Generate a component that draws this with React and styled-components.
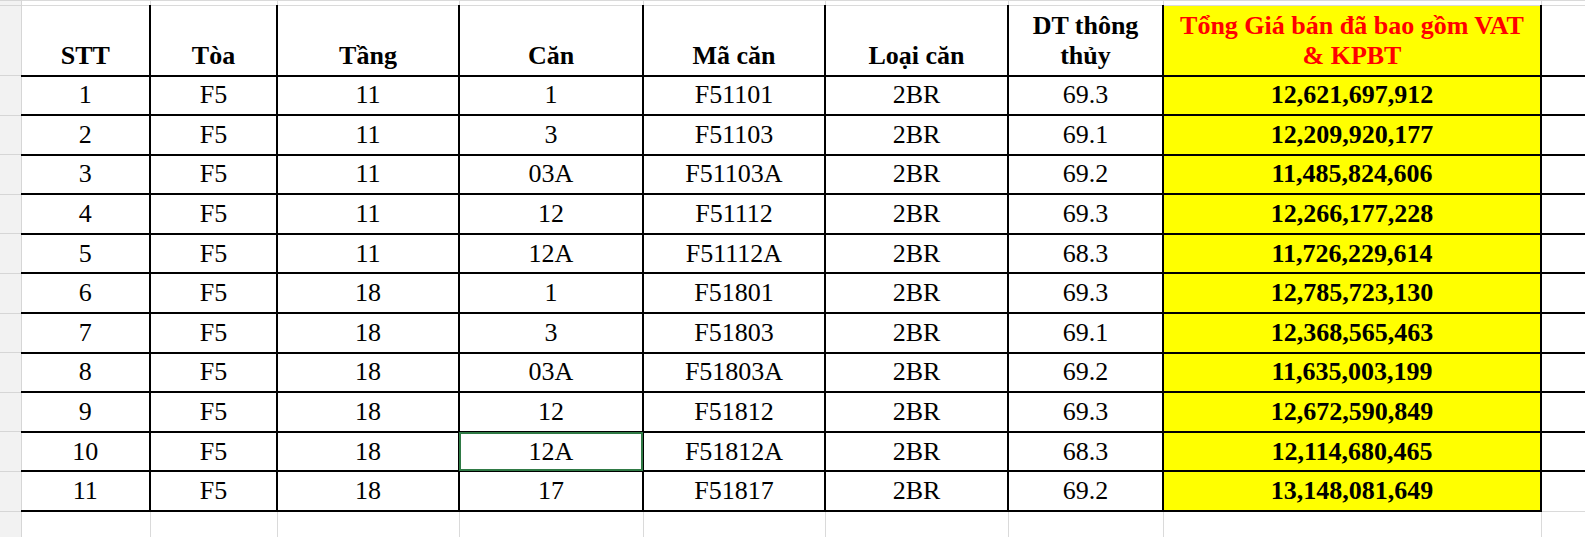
import React from 'react';
import styled, { createGlobalStyle } from 'styled-components'

const rows = [
  [1, 'F5', 11, '1', 'F51101', '2BR', '69.3', '12,621,697,912'],
  [2, 'F5', 11, '3', 'F51103', '2BR', '69.1', '12,209,920,177'],
  [3, 'F5', 11, '03A', 'F51103A', '2BR', '69.2', '11,485,824,606'],
  [4, 'F5', 11, '12', 'F51112', '2BR', '69.3', '12,266,177,228'],
  [5, 'F5', 11, '12A', 'F51112A', '2BR', '68.3', '11,726,229,614'],
  [6, 'F5', 18, '1', 'F51801', '2BR', '69.3', '12,785,723,130'],
  [7, 'F5', 18, '3', 'F51803', '2BR', '69.1', '12,368,565,463'],
  [8, 'F5', 18, '03A', 'F51803A', '2BR', '69.2', '11,635,003,199'],
  [9, 'F5', 18, '12', 'F51812', '2BR', '69.3', '12,672,590,849'],
  [10, 'F5', 18, '12A', 'F51812A', '2BR', '68.3', '12,114,680,465'],
  [11, 'F5', 18, '17', 'F51817', '2BR', '69.2', '13,148,081,649'],
]

const widths = [21, 129, 127, 182, 184, 182, 183, 155, 378, 59]

// selected cell: row 10, column "Căn"
const selected = { row: 9, col: 3 }

export default function App() {
  return (
    <>
      <GlobalStyle />
      <Viewport>
        <Sheet>
          <colgroup>
            {widths.map((w, i) => <col key={i} style={{ width: w }} />)}
          </colgroup>
          <tbody>
            <TopRow>
              <Gutter />
              {widths.slice(1).map((w, i) => <Blank key={i} />)}
            </TopRow>
            <HeaderRow>
              <Gutter />
              <Head>STT</Head>
              <Head>Tòa</Head>
              <Head>Tầng</Head>
              <Head>Căn</Head>
              <Head>Mã căn</Head>
              <Head>Loại căn</Head>
              <Head>DT thông<br />thủy</Head>
              <Head highlight>Tổng Giá bán đã bao gồm VAT<br />&amp; KPBT</Head>
              <Blank />
            </HeaderRow>
            {rows.map((r, ri) => (
              <DataRow key={ri}>
                <Gutter />
                {r.slice(0, 7).map((v, ci) => (
                  <Cell key={ci} selected={selected.row === ri && selected.col === ci}>{v}</Cell>
                ))}
                <Price>{r[7]}</Price>
                <Edge />
              </DataRow>
            ))}
            <FillRow>
              <Gutter />
              {widths.slice(1).map((w, i) => <Blank key={i} />)}
            </FillRow>
          </tbody>
        </Sheet>
      </Viewport>
    </>
  );
}

const GlobalStyle = createGlobalStyle`
  html, body {
    margin: 0;
    padding: 0;
    background: #fff;
    overflow: hidden;
  }
`

const Viewport = styled.div`
  width: 1585px;
  height: 537px;
  overflow: hidden;
  font-family: "Liberation Serif", "Times New Roman", serif;
  color: #000;
`

const Sheet = styled.table`
  border-collapse: collapse;
  table-layout: fixed;
  width: 1600px;
  font-size: 26px;
`

const TopRow = styled.tr`
  height: 5px;
`

const HeaderRow = styled.tr`
  height: 70px;
`

const DataRow = styled.tr`
  height: 39.6px;
`

const FillRow = styled.tr`
  height: 60px;
`

const Gutter = styled.td`
  background: #f2f2f2;
  border: 1px solid #d6d6d6;
  border-left: none;
  padding: 0;
`

const Blank = styled.td`
  border: 1px solid #dadada;
  padding: 0;
`

const Edge = styled(Blank)`
  border-top: 2px solid #000;
`

const Head = styled.td`
  border: 2px solid #000;
  border-top: 1px solid #dadada;
  border-left-color: ${p => p.highlight ? '#000' : '#000'};
  &:nth-child(2) {
    border-left: 1px solid #d6d6d6;
  }
  background: ${p => p.highlight ? '#ffff00' : '#fff'};
  color: ${p => p.highlight ? '#ff0000' : '#000'};
  font-weight: bold;
  text-align: center;
  vertical-align: bottom;
  line-height: 30px;
  padding: 0 0 4px;
  white-space: nowrap;
`

const Cell = styled.td`
  border: 2px solid #000;
  &:nth-child(2) {
    border-left: 1px solid #d6d6d6;
  }
  text-align: center;
  vertical-align: middle;
  padding: 0;
  line-height: 30px;
  white-space: nowrap;
  ${p => p.selected ? 'outline: 2px solid #2f7a45; outline-offset: -2px;' : ''}
`

const Price = styled(Cell)`
  background: #ffff00;
  font-weight: bold;
`
